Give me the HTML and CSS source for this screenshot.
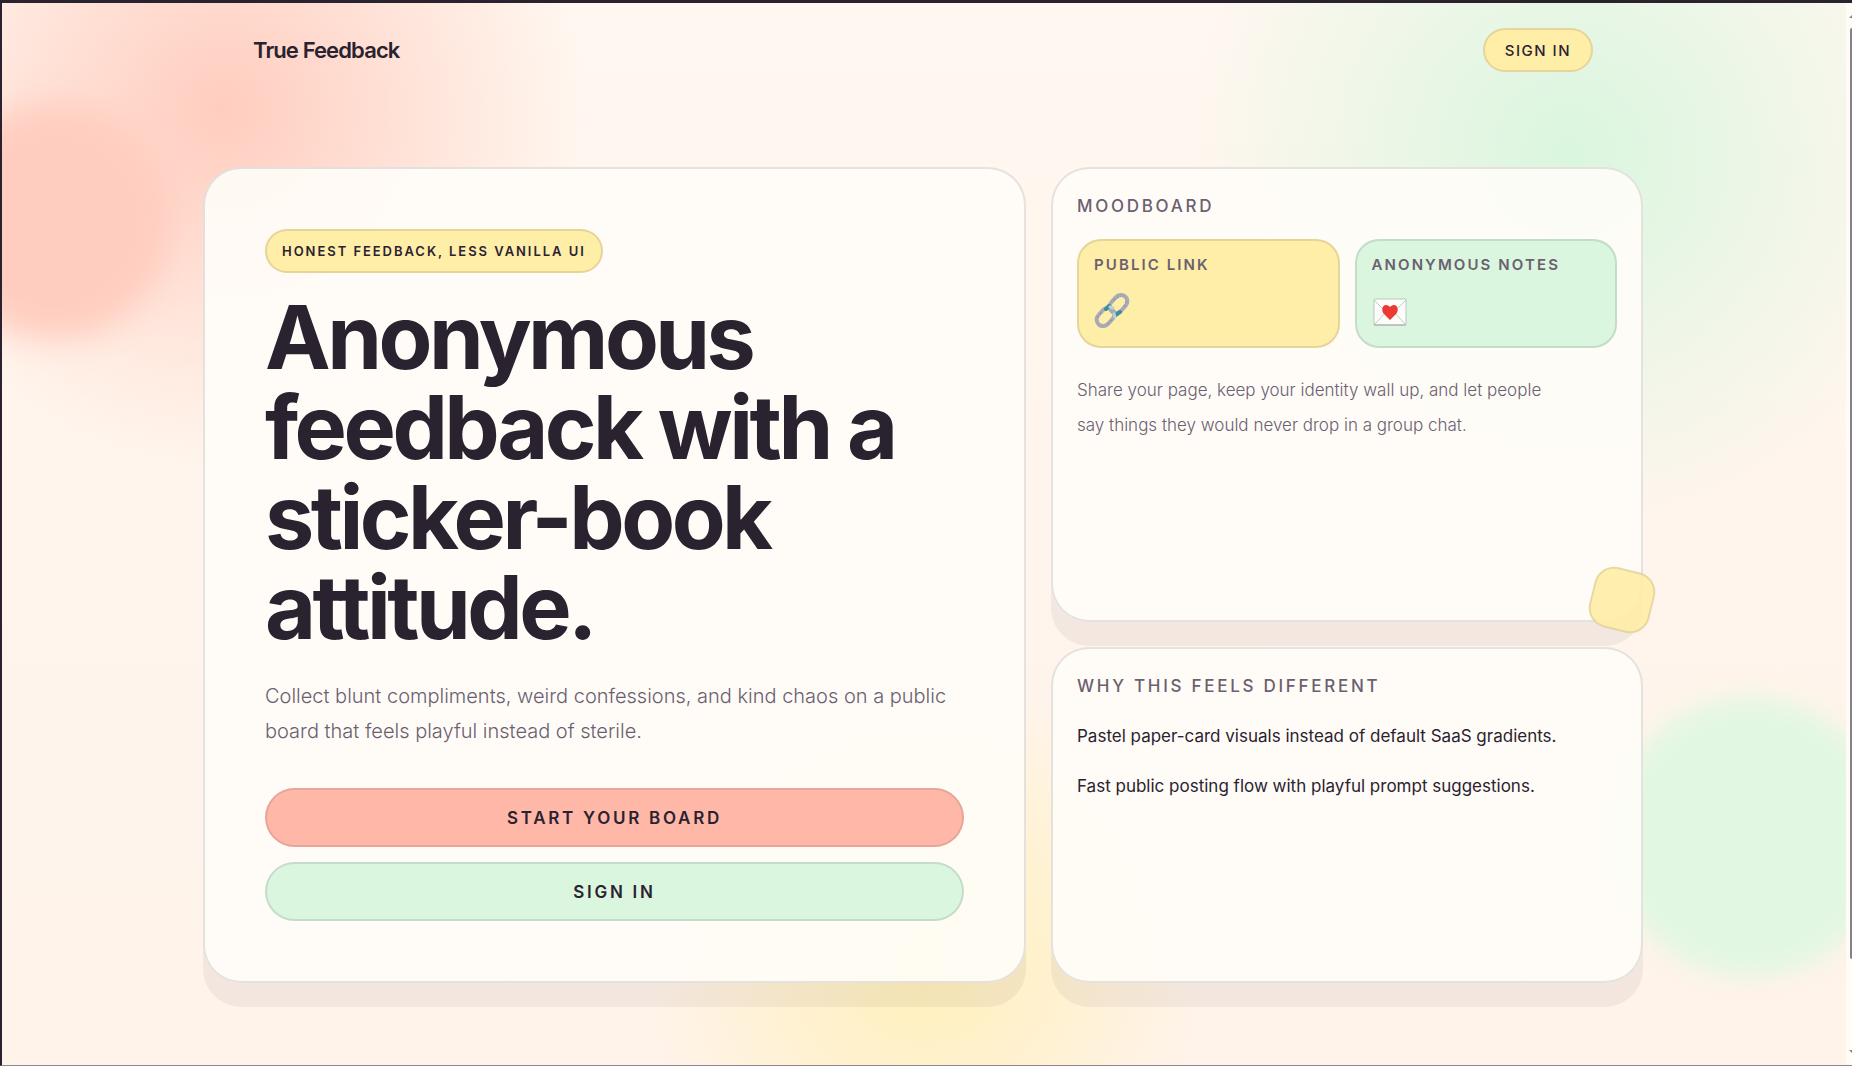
FILE: index.html
```
<!DOCTYPE html>
<html lang="en">
<head>
  <meta charset="UTF-8">
  <title>True Feedback</title>
  <meta name="viewport" content="width=device-width, initial-scale=1.0">
  <link rel="stylesheet" href="styles.css">
</head>
<body>
  <div class="backdrop">
    <div class="blob blob-coral"></div>
    <div class="blob blob-mint"></div>
  </div>

  <div class="page">
    <header class="topbar">
      <a class="brand" href="#">True Feedback</a>
      <a class="pill pill-link" href="#signin">Sign in</a>
    </header>

    <main class="board">
      <section class="card hero">
        <span class="pill tag">Honest feedback, less vanilla UI</span>
        <h1>Anonymous feedback with a sticker-book attitude.</h1>
        <p class="lead">Collect blunt compliments, weird confessions, and kind chaos on a public board that feels playful instead of sterile.</p>
        <div class="actions">
          <button class="btn btn-coral" type="button">Start your board</button>
          <button class="btn btn-mint" type="button">Sign in</button>
        </div>
      </section>

      <div class="side">
        <section class="card panel moodboard">
          <h2>Moodboard</h2>
          <div class="tiles">
            <div class="tile tile-yellow">
              <h3>Public link</h3>
              <svg class="emoji" viewBox="0 0 36 36" aria-hidden="true">
                <g fill="none" stroke-linecap="round">
                  <rect x="18" y="2" width="13" height="20" rx="6.5" transform="rotate(42 24.5 12)" stroke="#a9a9b8" stroke-width="4"/>
                  <rect x="5" y="15" width="13" height="20" rx="6.5" transform="rotate(42 11.5 25)" stroke="#a9a9b8" stroke-width="4"/>
                  <path d="M12 17l3-3M22 23l4-3" stroke="#3f8ba0" stroke-width="4"/>
                  <path d="M16 15l3 1M20 22l1 3" stroke="#b5d6cf" stroke-width="3"/>
                  <path d="M20 8l7-4M30 14l3-6M4 25l4-6M14 32l5-5" stroke="#5f95a8" stroke-dasharray="1 3"/>
                </g>
              </svg>
            </div>
            <div class="tile tile-mint">
              <h3>Anonymous notes</h3>
              <svg class="emoji" viewBox="0 0 36 36" aria-hidden="true">
                <rect x="2" y="7" width="32" height="26" rx="1" fill="#fffdfa" stroke="#b9c8c0"/>
                <path d="M2 8l14 14q2 2 4 0L34 8M2 33l12-13M34 33L22 20" fill="none" stroke="#b3cfc0"/>
                <path d="M2 33h32" stroke="#a9a6b0"/>
                <path d="M18 28l-6-6c-3-3-2-9 2-9 2 0 3 1 4 2 1-1 2-2 4-2 4 0 5 6 2 9z" fill="#ea3a32"/>
              </svg>
            </div>
          </div>
          <p class="note">Share your page, keep your identity wall up, and let people say things they would never drop in a group chat.</p>
          <span class="sticker"></span>
        </section>

        <section class="card panel reasons">
          <h2>Why this feels different</h2>
          <p>Pastel paper-card visuals instead of default SaaS gradients.</p>
          <p>Fast public posting flow with playful prompt suggestions.</p>
        </section>
      </div>
    </main>
  </div>

  <div class="scrollbar">
    <span class="arrow arrow-up"></span>
    <span class="thumb"></span>
    <span class="arrow arrow-down"></span>
  </div>
</body>
</html>
```

FILE: styles.css
```
:root {
  --ink: #2b2230;
  --muted: #6b6070;
  --paper: rgba(255, 253, 248, 0.9);
  --coral: #ffb8a7;
  --mint: #daf6df;
  --yellow: #ffeea8;
  --line: rgba(43, 34, 48, 0.12);
}

* {
  box-sizing: border-box;
}

body {
  margin: 0;
  min-height: 100vh;
  display: flex;
  color: var(--ink);
  font-family: Inter, "Liberation Sans", sans-serif;
  background: #fff5ec;
  border-top: 3px solid var(--ink);
  border-left: 2px solid var(--ink);
  border-bottom: 1px solid #8d8790;
  overflow: hidden;
}

a {
  color: inherit;
  text-decoration: none;
}

h1, h2, h3, p {
  margin: 0;
}

.backdrop {
  position: absolute;
  inset: 3px 6px 1px 2px;
  overflow: hidden;
  z-index: -1;
  background:
    radial-gradient(circle at 12% 10%, #ffcdbf, rgba(255, 205, 191, 0) 360px),
    radial-gradient(circle at 85% 14%, #daf6df, rgba(218, 246, 223, 0) 380px),
    radial-gradient(circle at 50% 90%, #fff0b8, rgba(255, 240, 184, 0) 280px),
    linear-gradient(180deg, #fff7f0, #fff5ec 50%, #fff3ea);
}

.blob {
  position: absolute;
  border-radius: 50%;
}

.blob-coral {
  width: 236px;
  height: 236px;
  left: -66px;
  top: 100px;
  background: #ffcdbf;
  filter: blur(16px);
}

.blob-mint {
  width: 280px;
  height: 280px;
  right: -44px;
  bottom: 88px;
  background: #e2f7e2;
  filter: blur(12px);
}

.page {
  flex: 1;
  display: flex;
  flex-direction: column;
  padding: 0 26px 82px 24px;
}

.topbar, .board {
  width: 100%;
  max-width: 1440px;
  margin: 0 auto;
}

.topbar {
  display: flex;
  align-items: center;
  justify-content: space-between;
  padding: 25px 50px;
}

.brand {
  font-size: 22px;
  font-weight: 600;
  letter-spacing: -0.04em;
}

.pill {
  display: inline-flex;
  align-items: center;
  height: 44px;
  border: 2px solid var(--line);
  border-radius: 22px;
  background: var(--yellow);
  text-transform: uppercase;
}

.pill-link {
  padding: 0 20px;
  font-size: 15px;
  font-weight: 500;
  letter-spacing: 0.1em;
}

.board {
  flex: 1;
  display: grid;
  grid-template-columns: 823fr 592fr;
  gap: 25px;
  margin-top: 70px;
}

.card {
  background: var(--paper);
  border: 2px solid var(--line);
  border-radius: 38px;
  box-shadow: 0 24px 0 rgba(43, 34, 48, 0.06);
}

.hero {
  padding: 60px;
}

.tag {
  padding: 0 15px;
  font-size: 13px;
  font-weight: 600;
  letter-spacing: 0.15em;
}

h1 {
  margin-top: 19px;
  font-size: 88px;
  line-height: 90px;
  font-weight: 700;
  letter-spacing: -0.04em;
}

.lead {
  margin-top: 27px;
  font-size: 20px;
  line-height: 35px;
  font-weight: 300;
  color: var(--muted);
}

.actions {
  display: flex;
  flex-direction: column;
  gap: 15px;
  margin-top: 39px;
}

.btn {
  height: 59px;
  border: 2px solid var(--line);
  border-radius: 30px;
  color: var(--ink);
  font: 600 17px Inter, "Liberation Sans", sans-serif;
  letter-spacing: 0.16em;
  text-transform: uppercase;
}

.btn-coral {
  background: var(--coral);
}

.btn-mint {
  background: var(--mint);
}

.side {
  display: grid;
  grid-template-rows: 455fr 336fr;
  gap: 25px;
}

.panel {
  position: relative;
  padding: 24px;
}

h2 {
  font-size: 17px;
  line-height: 26px;
  font-weight: 500;
  letter-spacing: 0.16em;
  text-transform: uppercase;
  color: var(--muted);
}

.tiles {
  display: grid;
  grid-template-columns: 1fr 1fr;
  gap: 15px;
  margin-top: 20px;
}

.tile {
  height: 109px;
  padding: 14px 15px;
  border: 2px solid var(--line);
  border-radius: 24px;
}

.tile-yellow {
  background: var(--yellow);
}

.tile-mint {
  background: var(--mint);
}

h3 {
  font-size: 15px;
  line-height: 20px;
  font-weight: 600;
  letter-spacing: 0.14em;
  text-transform: uppercase;
  color: var(--muted);
}

.emoji {
  display: block;
  width: 36px;
  height: 36px;
  margin-top: 17px;
}

.note {
  margin-top: 25px;
  max-width: 480px;
  font-size: 17px;
  line-height: 35px;
  font-weight: 300;
  color: var(--muted);
}

.reasons p {
  margin-top: 20px;
  font-size: 17px;
  line-height: 30px;
}

.reasons h2 {
  margin-bottom: 22px;
}

.sticker {
  position: absolute;
  right: -12px;
  bottom: -11px;
  width: 62px;
  height: 62px;
  border: 2px solid var(--line);
  border-radius: 20px;
  background: var(--yellow);
  opacity: 0.9;
  transform: rotate(14deg);
}

.scrollbar {
  width: 6px;
  display: flex;
  flex-direction: column;
  align-items: flex-end;
  padding: 12px 0;
  background: #fffcf6;
}

.thumb {
  width: 2px;
  flex: 1;
  margin: 10px 0 91px;
  background: #85808a;
  border-radius: 2px 0 0 2px;
}

.arrow {
  width: 3px;
  height: 3px;
  background: #85808a;
}

.arrow-up {
  clip-path: polygon(100% 0, 100% 100%, 0 100%);
}

.arrow-down {
  clip-path: polygon(0 0, 100% 0, 100% 100%);
}
```
